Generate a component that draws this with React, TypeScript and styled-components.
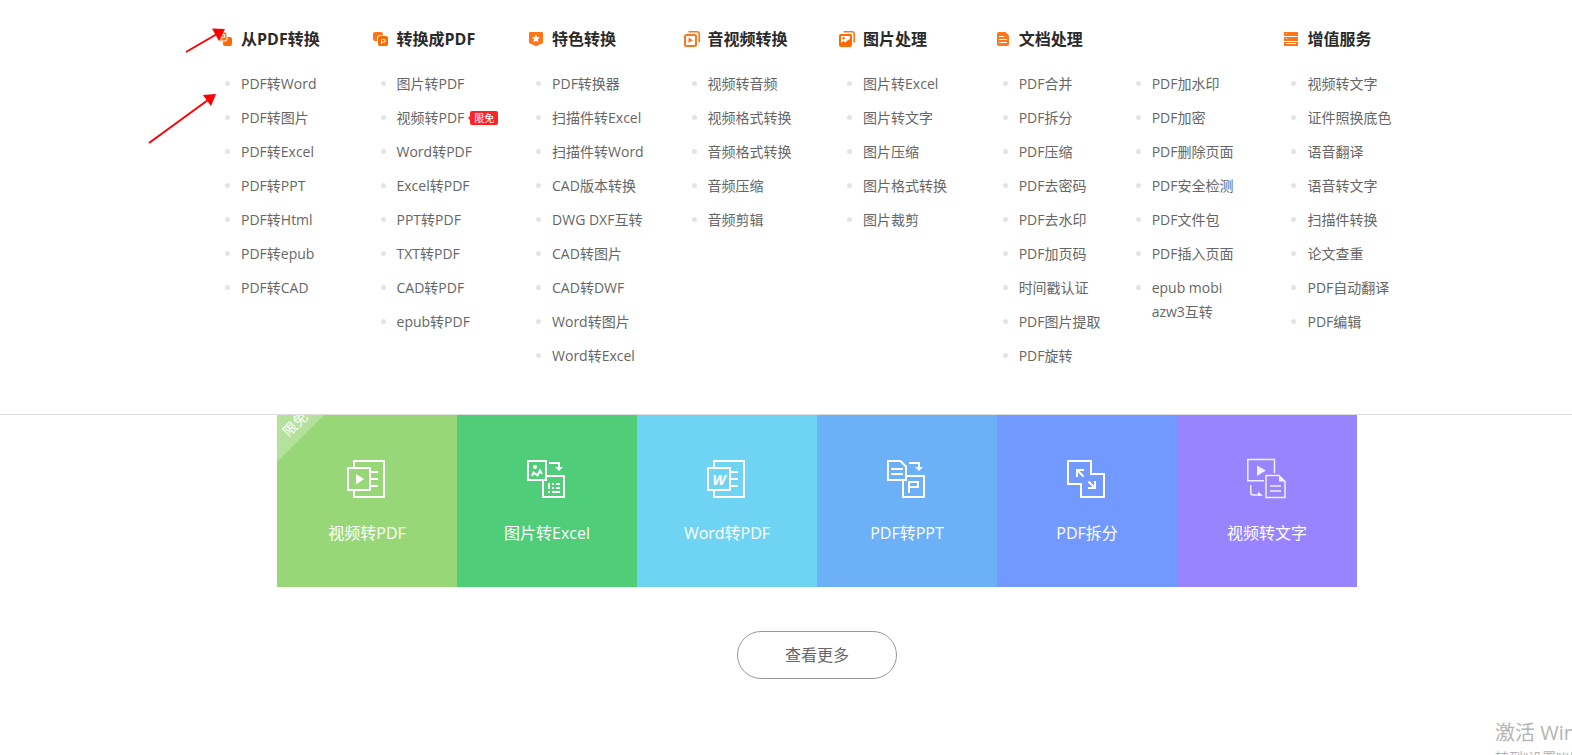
import React from "react";
import styled, { createGlobalStyle } from "styled-components";

const GlobalStyle = createGlobalStyle`
  *, *::before, *::after { box-sizing: border-box; }
  body {
    margin: 0;
    background: #fff;
    color: #666;
    font-family: "Open Sans", "Noto Sans CJK SC", sans-serif;
    font-size: 14px;
    line-height: 24px;
  }
  ul, h2 { margin: 0; padding: 0; }
  ul { list-style: none; }
  a { color: inherit; text-decoration: none; }
`;

const Page = styled.div`
  position: relative;
  min-height: 100vh;
  overflow: hidden;
`;

const Menu = styled.nav`
  display: grid;
  grid-template-columns: repeat(5, 7fr) 13fr 7fr;
  padding: 27px 133px 36px 217px;
  border-bottom: 1px solid #ddd;
`;

const Group = styled.section`
  min-width: 0;
`;

const GroupTitle = styled.h2`
  display: flex;
  align-items: center;
  gap: 8px;
  margin-bottom: 21px;
  color: #2a2a2a;
  font-size: 16px;
  font-weight: 700;
  line-height: 24px;
  white-space: nowrap;
`;

const TitleIcon = styled.svg`
  flex: none;
  width: 16px;
  height: 16px;
`;

const Lists = styled.div`
  display: flex;
`;

const List = styled.ul`
  flex: none;
  width: 133px;
`;

const Item = styled.li`
  display: flex;
  gap: 11px;
  margin-bottom: 10px;
  padding-left: 8px;
  white-space: nowrap;

  &::before {
    content: "";
    flex: none;
    width: 5px;
    height: 5px;
    margin-top: 9px;
    border-radius: 50%;
    background: #e4e4e4;
  }
`;

const ItemLink = styled.a`
  white-space: pre-line;
`;

const Badge = styled.span`
  position: relative;
  flex: none;
  align-self: center;
  margin-left: -5px;
  padding: 0 4px;
  border-radius: 2px;
  background: #ff2424;
  color: #fff;
  font-size: 10px;
  line-height: 14px;

  &::before {
    content: "";
    position: absolute;
    top: 5px;
    left: -2px;
    border: solid transparent;
    border-width: 2px 2px 2px 0;
    border-right-color: #ff2424;
  }
`;

const Showcase = styled.main`
  display: flex;
  flex-direction: column;
  align-items: center;
  gap: 44px;
  padding: 0 0 76px 62px;
`;

const Tiles = styled.div`
  display: grid;
  grid-template-columns: repeat(6, 1fr);
  width: 100%;
  max-width: 1080px;
`;

const Tile = styled.a<{ $color: string }>`
  position: relative;
  display: flex;
  flex-direction: column;
  align-items: center;
  gap: 21px;
  padding: 45px 0 42px;
  overflow: hidden;
  background: ${(p) => p.$color};
  color: #fff;
  font-size: 16px;
  line-height: 24px;
`;

const TileIcon = styled.svg`
  width: 40px;
  height: 40px;
  overflow: visible;
  fill: none;
  stroke: #fff;
  stroke-width: 2;
`;

const Ribbon = styled.span`
  position: absolute;
  top: -10px;
  left: -44px;
  width: 120px;
  height: 34px;
  background: rgba(255, 255, 255, 0.28);
  font-size: 14px;
  line-height: 40px;
  text-align: center;
  transform: rotate(-45deg);
`;

const MoreButton = styled.button`
  width: 160px;
  height: 48px;
  border: 1px solid #999;
  border-radius: 24px;
  background: #fff;
  color: #666;
  font: inherit;
  font-size: 16px;
  cursor: pointer;
`;

const Arrows = styled.svg`
  position: absolute;
  top: 0;
  left: 0;
  width: 240px;
  height: 160px;
  pointer-events: none;
  stroke: #f00;
  stroke-width: 2;
  fill: #f00;
`;

const Watermark = styled.aside`
  position: absolute;
  top: 718px;
  right: -54px;
  height: 37px;
  width: 131px;
  overflow: hidden;
  color: #b4b4b4;
  white-space: nowrap;
  pointer-events: none;
`;

const WatermarkTitle = styled.div`
  font-size: 20px;
  line-height: 30px;
`;

const WatermarkNote = styled.div`
  font-size: 14px;
  line-height: 20px;
`;

const O = "#ff7519";

const titleIcons: Record<string, React.ReactNode> = {
  from: (
    <>
      <rect x="6" y="6" width="9" height="9" rx="2" fill="#ff6a00" />
      <rect x="1" y="1" width="9" height="9" rx="2" fill={O} stroke="#fff" />
      <path d="M4 8.500V3.500H7.500V6.200H4" fill="none" stroke="#fff" />
    </>
  ),
  to: (
    <>
      <rect x="0" y="1" width="10" height="9" rx="2" fill={O} />
      <rect x="4.500" y="4.500" width="11" height="11" rx="2.500" fill="#ff6a00" stroke="#fff" />
      <path d="M8.500 13V8.500H12V11H8.500" fill="none" stroke="#fff" />
    </>
  ),
  star: (
    <>
      <path d="M2 1H14Q15 1 15 2V12L8 15.200L1 12V2Q1 1 2 1Z" fill={O} />
      <path d="M8 3.500L9.200 6.100L12 6.400L9.900 8.300L10.500 11.100L8 9.700L5.500 11.100L6.100 8.300L4 6.400L6.800 6.100Z" fill="#fff" />
    </>
  ),
  video: (
    <>
      <rect x="1" y="4" width="11" height="11" rx="1.500" fill="none" stroke={O} strokeWidth="2" />
      <path d="M4.500 .8H13Q15.200 .8 15.200 3V11.500" fill="none" stroke={O} strokeWidth="1.600" />
      <path d="M4.500 6.500L9 9.300L4.500 12Z" fill={O} />
    </>
  ),
  image: (
    <>
      <rect x="0" y="3" width="13" height="13" rx="2" fill="#ff6a00" />
      <path d="M4.500 .8H13Q15.200 .8 15.200 3V11.500" fill="none" stroke={O} strokeWidth="1.600" />
      <path d="M2 5H11V8Q8 9 6.500 11.500L4.500 10L2 12Z" fill="#fff" />
      <circle cx="4.600" cy="7.300" r="1.300" fill={O} />
    </>
  ),
  doc: (
    <>
      <path d="M4 1H10.500L14 4.500V13Q14 15 12 15H4Q2 15 2 13V3Q2 1 4 1Z" fill={O} />
      <path d="M4 5.500H9M4 8.500H12M4 11.500H12" stroke="#fff" />
    </>
  ),
  service: (
    <>
      <path d="M1 1H15V5H1ZM1 6H15V10H1ZM1 11H15V15H1Z" fill={O} />
      <path d="M3 2.500H4M3 7.500H4M3 12.500H13" stroke="#fff" />
    </>
  ),
};

const swap = (
  <>
    <path d="M22 3H32V8" />
    <path d="M28 7H36L32 11Z" fill="#fff" stroke="none" />
    <path d="M20 16H37V37H16V21" />
  </>
);

const booklet = (
  <>
    <path d="M7 7V1H37V37H7V31" />
    <rect x="1" y="8" width="22" height="22" />
    <path d="M24 12H31M24 19H31M24 26H31" />
  </>
);

const tileIcons: Record<string, React.ReactNode> = {
  video: (
    <>
      {booklet}
      <path d="M9 14L17 19L9 24.500Z" fill="#fff" stroke="none" />
    </>
  ),
  excel: (
    <>
      <path d="M1 1H19V20H1Z" />
      <circle cx="8" cy="7" r="2" fill="#fff" stroke="none" />
      <path d="M5 16L6.500 12.500L10.500 15.500L13 10.500L15 14" />
      {swap}
      <path d="M22 23V29M22 31V33M25 24H27M29 24H33M25 28H27M29 28H33M25 32H33" />
    </>
  ),
  word: (
    <>
      {booklet}
      <text x="12" y="25" textAnchor="middle" fontSize="15" fontWeight="700" fontStyle="italic" fill="#fff" stroke="none">
        W
      </text>
    </>
  ),
  ppt: (
    <>
      <path d="M1 1H13.500L19 6.500V20H1Z" />
      <path d="M4 9H16M4 14H16" />
      {swap}
      <path d="M22 33V22H31V27H22" />
    </>
  ),
  split: (
    <>
      <path d="M1 1H24V14H37V37H14V24H1Z" />
      <path d="M10 17V10H17M10 10L16.500 16.500M28 21V28H21M28 28L21.500 21.500" />
    </>
  ),
  text: (
    <g strokeWidth="1.500" opacity=".88">
      <path d="M27.500 13V-.5H.8V20.800H17" />
      <path d="M10 5.500L19 10.500L10 16Z" fill="#fff" stroke="none" />
      <path d="M32 15.500H19V37.500H38V21.500Z" />
      <path d="M32 15V21.500H38.500Z" fill="#fff" stroke="none" />
      <path d="M23 26H34M23 31H34" />
      <path d="M3.800 25V33Q3.800 35 6 35H14" />
      <path d="M11 31.500L16 35.800H11Z" fill="#fff" stroke="none" />
    </g>
  ),
};

type Entry = string | { label: string; badge: string };

const groups: { title: string; icon: string; lists: Entry[][] }[] = [
  {
    title: "从PDF转换",
    icon: "from",
    lists: [["PDF转Word", "PDF转图片", "PDF转Excel", "PDF转PPT", "PDF转Html", "PDF转epub", "PDF转CAD"]],
  },
  {
    title: "转换成PDF",
    icon: "to",
    lists: [
      ["图片转PDF", { label: "视频转PDF", badge: "限免" }, "Word转PDF", "Excel转PDF", "PPT转PDF", "TXT转PDF", "CAD转PDF", "epub转PDF"],
    ],
  },
  {
    title: "特色转换",
    icon: "star",
    lists: [
      ["PDF转换器", "扫描件转Excel", "扫描件转Word", "CAD版本转换", "DWG DXF互转", "CAD转图片", "CAD转DWF", "Word转图片", "Word转Excel"],
    ],
  },
  {
    title: "音视频转换",
    icon: "video",
    lists: [["视频转音频", "视频格式转换", "音频格式转换", "音频压缩", "音频剪辑"]],
  },
  {
    title: "图片处理",
    icon: "image",
    lists: [["图片转Excel", "图片转文字", "图片压缩", "图片格式转换", "图片裁剪"]],
  },
  {
    title: "文档处理",
    icon: "doc",
    lists: [
      ["PDF合并", "PDF拆分", "PDF压缩", "PDF去密码", "PDF去水印", "PDF加页码", "时间戳认证", "PDF图片提取", "PDF旋转"],
      ["PDF加水印", "PDF加密", "PDF删除页面", "PDF安全检测", "PDF文件包", "PDF插入页面", "epub mobi\nazw3互转"],
    ],
  },
  {
    title: "增值服务",
    icon: "service",
    lists: [["视频转文字", "证件照换底色", "语音翻译", "语音转文字", "扫描件转换", "论文查重", "PDF自动翻译", "PDF编辑"]],
  },
];

const tiles = [
  { label: "视频转PDF", icon: "video", color: "#97d778", ribbon: "限免" },
  { label: "图片转Excel", icon: "excel", color: "#4fcd78" },
  { label: "Word转PDF", icon: "word", color: "#6fd4f4" },
  { label: "PDF转PPT", icon: "ppt", color: "#6cb0f7" },
  { label: "PDF拆分", icon: "split", color: "#7299ff" },
  { label: "视频转文字", icon: "text", color: "#9884ff" },
];

function MenuItem({ entry }: { entry: Entry }) {
  const label = typeof entry === "string" ? entry : entry.label;
  return (
    <Item>
      <ItemLink href="#">{label}</ItemLink>
      {typeof entry !== "string" && <Badge>{entry.badge}</Badge>}
    </Item>
  );
}

export default function App() {
  return (
    <Page>
      <GlobalStyle />
      <Menu>
        {groups.map((group) => (
          <Group key={group.title}>
            <GroupTitle>
              <TitleIcon viewBox="0 0 16 16" aria-hidden="true">
                {titleIcons[group.icon]}
              </TitleIcon>
              {group.title}
            </GroupTitle>
            <Lists>
              {group.lists.map((list, i) => (
                <List key={i}>
                  {list.map((entry, j) => (
                    <MenuItem key={j} entry={entry} />
                  ))}
                </List>
              ))}
            </Lists>
          </Group>
        ))}
      </Menu>

      <Showcase>
        <Tiles>
          {tiles.map((tile) => (
            <Tile key={tile.label} href="#" $color={tile.color}>
              {tile.ribbon && <Ribbon>{tile.ribbon}</Ribbon>}
              <TileIcon viewBox="0 0 40 40" aria-hidden="true">
                {tileIcons[tile.icon]}
              </TileIcon>
              {tile.label}
            </Tile>
          ))}
        </Tiles>
        <MoreButton type="button">查看更多</MoreButton>
      </Showcase>

      <Arrows viewBox="0 0 240 160" aria-hidden="true">
        <path d="M186 52L217 34M149 143L208 100" fill="none" />
        <path d="M225 29L212 28.500L219 41ZM216 94L203 95L211 106Z" stroke="none" />
      </Arrows>

      <Watermark>
        <WatermarkTitle>激活 Windows</WatermarkTitle>
        <WatermarkNote>转到“设置”以激活 Windows。</WatermarkNote>
      </Watermark>
    </Page>
  );
}
